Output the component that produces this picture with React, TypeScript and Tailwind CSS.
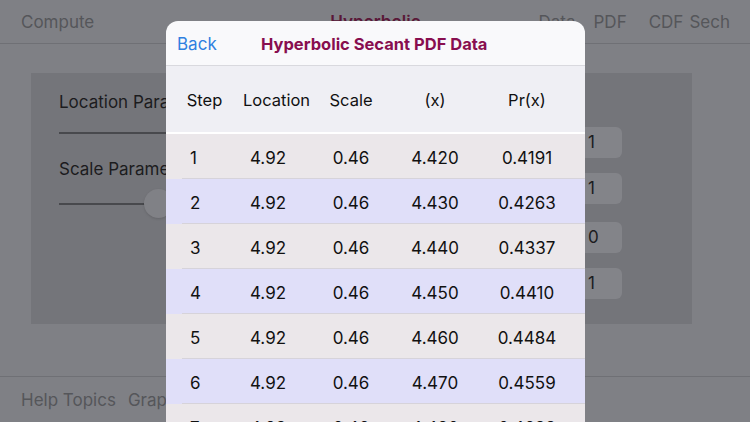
import React from "react";

const rows = [
  { step: 1, loc: "4.92", scale: "0.46", x: "4.420", p: "0.4191" },
  { step: 2, loc: "4.92", scale: "0.46", x: "4.430", p: "0.4263" },
  { step: 3, loc: "4.92", scale: "0.46", x: "4.440", p: "0.4337" },
  { step: 4, loc: "4.92", scale: "0.46", x: "4.450", p: "0.4410" },
  { step: 5, loc: "4.92", scale: "0.46", x: "4.460", p: "0.4484" },
  { step: 6, loc: "4.92", scale: "0.46", x: "4.470", p: "0.4559" },
  { step: 7, loc: "4.92", scale: "0.46", x: "4.480", p: "0.4633" },
];

const font = { fontFamily: "Inter, 'Liberation Sans', sans-serif" };

function Background() {
  return (
    <div className="flex h-[422px] w-[750px] flex-col bg-[#7f8085]">
      <div className="flex h-[44px] items-center border-b border-[#6f7075] pl-[21px] pr-[20px] pt-[2px] text-[17px] text-[#55565a]">
        <span>Compute</span>
        <span className="ml-[236px] font-semibold text-[#5a1838]">Hyperbolic</span>
        <span className="ml-auto">Data</span>
        <span className="ml-[18px]">PDF</span>
        <span className="ml-[22px]">CDF</span>
        <span className="ml-[6px]">Sech</span>
      </div>
      <div className="px-[31px] pt-[29px]">
        <div className="flex h-[251px] w-[661px] bg-[#74757a] pl-[28px] pt-[17px]">
          <div className="flex w-[200px] flex-col">
            <span className="text-[17px] text-[#1c1c1e]">Location Parameter</span>
            <div className="mt-[16px] h-[2px] w-[150px] bg-[#48494d]" />
            <span className="mt-[23px] text-[17px] text-[#1c1c1e]">Scale Parameter</span>
            <div className="relative mt-[21px] h-[2px] w-[150px] bg-[#48494d]">
              <div className="absolute left-[85px] top-[-14px] h-[29px] w-[29px] rounded-full bg-[#808186] shadow" />
            </div>
          </div>
          <div className="ml-auto mr-[70px] flex flex-col gap-[15px] pt-[37px]">
            {["1", "1", "0", "1"].map((v, i) => (
              <div
                key={i}
                className={`flex h-[31px] w-[100px] items-center rounded-[6px] bg-[#838489] pl-[66px] text-[17px] text-[#1c1c1e] ${i === 2 ? "mt-[3px]" : ""}`}
              >
                {v}
              </div>
            ))}
          </div>
        </div>
      </div>
      <div className="mt-auto flex h-[46px] items-center gap-[12px] border-t border-[#6f7075] pl-[21px] pt-[2px] text-[17px] text-[#55565a]">
        <span>Help Topics</span>
        <span>Graph</span>
      </div>
    </div>
  );
}

function Modal() {
  return (
    <div className="absolute left-[166px] top-[21px] h-[420px] w-[419px] overflow-hidden rounded-t-[12px] bg-[#f9f9fb]">
      <div className="relative flex h-[45px] items-center border-b border-[#d9d9de] pl-[11px] pt-[3px]">
        <span className="text-[17px] text-[#2f80e0]">Back</span>
        <span className="absolute left-[95px] text-[16.5px] font-bold text-[#880e4f]">
          Hyperbolic Secant PDF Data
        </span>
      </div>
      <div className="grid h-[66px] grid-cols-[77px_62px_92px_76px_108px] items-center bg-[#efeff4] pt-[3px] text-[16.5px] text-[#111]">
        <span className="text-center">Step</span>
        <span className="text-center">Location</span>
        <span className="text-center">Scale</span>
        <span className="text-center">(x)</span>
        <span className="text-center">Pr(x)</span>
      </div>
      <div className="h-[2px] bg-white" />
      {rows.map((r) => (
        <div
          key={r.step}
          className={`relative grid h-[45px] grid-cols-[77px_62px_92px_76px_108px] items-center pt-[4px] text-[17px] text-[#111] ${r.step % 2 ? "bg-[#ebe7ea]" : "bg-[#e0dff9]"}`}
        >
          <span className="pl-[24px]">{r.step}</span>
          <span className="pr-[12px] text-center">{r.loc}</span>
          <span className="text-center">{r.scale}</span>
          <span className="text-center">{r.x}</span>
          <span className="text-center">{r.p}</span>
          <div className="absolute bottom-0 left-[16px] right-0 h-px bg-[#d6d3da]" />
        </div>
      ))}
    </div>
  );
}

export default function App() {
  return (
    <div className="relative h-[422px] w-[750px] overflow-hidden" style={font}>
      <Background />
      <Modal />
    </div>
  );
}
